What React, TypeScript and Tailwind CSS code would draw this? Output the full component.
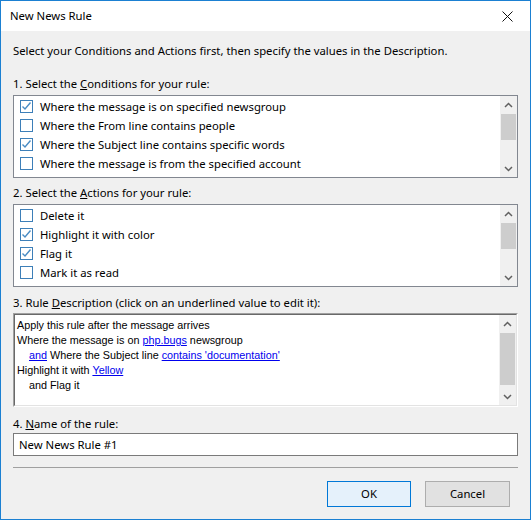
import React from 'react';

const ui = { fontFamily: '"Noto Sans", "Open Sans", sans-serif' };
const desc = { fontFamily: '"Liberation Sans", Arial, sans-serif' };

const Check: React.FC<{ on: boolean }> = ({ on }) => (
  <span className="w-[13px] h-[13px] border border-[#3d7fb8] bg-white flex items-center justify-center shrink-0">
    {on && (
      <svg width="11" height="11" viewBox="0 0 11 11">
        <path d="M1.5 5.5 L4 8 L9.5 1.5" fill="none" stroke="#4a8cc4" strokeWidth="1.4" />
      </svg>
    )}
  </span>
);

const ScrollBar: React.FC<{ thumbTop: number; thumbH: number }> = ({ thumbTop, thumbH }) => (
  <div className="w-[17px] bg-[#f0f0f0] flex flex-col shrink-0">
    <div className="h-[17px] flex items-center justify-center">
      <svg width="9" height="6" viewBox="0 0 9 6">
        <path d="M1 5 L4.5 1.5 L8 5" fill="none" stroke="#606060" strokeWidth="1.5" />
      </svg>
    </div>
    <div className="flex-1 relative">
      <div className="absolute left-[1px] right-[1px] bg-[#cdcdcd]" style={{ top: thumbTop, height: thumbH }} />
    </div>
    <div className="h-[17px] flex items-center justify-center">
      <svg width="9" height="6" viewBox="0 0 9 6">
        <path d="M1 1 L4.5 4.5 L8 1" fill="none" stroke="#606060" strokeWidth="1.5" />
      </svg>
    </div>
  </div>
);

const CheckList: React.FC<{ items: [string, boolean][] }> = ({ items }) => (
  <div className="h-[83px] border border-[#828790] bg-white flex">
    <div className="flex-1 pt-[1px] pl-[6px]">
      {items.map(([t, on]) => (
        <div key={t} className="h-[19px] flex items-center gap-[7px] text-[11.3px] text-black">
          <Check on={on} />
          <span>{t}</span>
        </div>
      ))}
    </div>
    <ScrollBar thumbTop={1} thumbH={26} />
  </div>
);

const Link: React.FC<{ children: React.ReactNode }> = ({ children }) => (
  <span className="text-[#0000ee] underline">{children}</span>
);

export default function App() {
  return (
    <div className="w-[531px] h-[520px] bg-[#f0f0f0] border border-[#1b80d2] flex flex-col text-black" style={ui}>
      <div className="h-[30px] bg-white flex items-center justify-between pl-[9px] pr-[17px] shrink-0">
        <span className="text-[11.3px]">New News Rule</span>
        <svg width="11" height="11" viewBox="0 0 11 11">
          <path d="M0.5 0.5 L10.5 10.5 M10.5 0.5 L0.5 10.5" stroke="#111" strokeWidth="1" />
        </svg>
      </div>
      <div className="flex-1 flex flex-col px-[12px] text-[11.3px] leading-[16px]">
        <div className="mt-[12px]">Select your Conditions and Actions first, then specify the values in the Description.</div>
        <div className="mt-[17px] mb-[3px]">1. Select the <span className="underline">C</span>onditions for your rule:</div>
        <CheckList
          items={[
            ['Where the message is on specified newsgroup', true],
            ['Where the From line contains people', false],
            ['Where the Subject line contains specific words', true],
            ['Where the message is from the specified account', false],
          ]}
        />
        <div className="mt-[7px] mb-[3px]">2. Select the <span className="underline">A</span>ctions for your rule:</div>
        <CheckList
          items={[
            ['Delete it', false],
            ['Highlight it with color', true],
            ['Flag it', true],
            ['Mark it as read', false],
          ]}
        />
        <div className="mt-[8px] mb-[2px]">3. Rule <span className="underline">D</span>escription (click on an underlined value to edit it):</div>
        <div className="h-[94px] border border-[#a0a0a0] border-r-white border-b-white flex">
          <div className="flex-1 flex border border-[#696969] border-r-[#e3e3e3] border-b-[#e3e3e3] bg-white">
            <div className="flex-1 pt-[3px] pl-[2px] text-[10.8px] leading-[15px] text-black" style={desc}>
              <div>Apply this rule after the message arrives</div>
              <div>Where the message is on <Link>php.bugs</Link> newsgroup</div>
              <div className="pl-[12px]"><Link>and</Link> Where the Subject line <Link>contains 'documentation'</Link></div>
              <div>Highlight it with <Link>Yellow</Link></div>
              <div className="pl-[12px]">and Flag it</div>
            </div>
            <ScrollBar thumbTop={1} thumbH={52} />
          </div>
        </div>
        <div className="mt-[9px] mb-[1px]">4. <span className="underline">N</span>ame of the rule:</div>
        <div className="h-[23px] border border-[#7a7a7a] bg-white flex items-center pl-[5px]">New News Rule #1</div>
        <div className="mt-[11px] h-px bg-[#a0a0a0]" />
        <div className="mt-[13px] flex justify-end gap-[14px] pr-[8px]">
          <button className="w-[84px] h-[26px] bg-[#e5f1fb] border border-[#0078d7] text-[11.3px]">OK</button>
          <button className="w-[85px] h-[26px] bg-[#e1e1e1] border border-[#adadad] text-[11.3px]">Cancel</button>
        </div>
      </div>
    </div>
  );
}
